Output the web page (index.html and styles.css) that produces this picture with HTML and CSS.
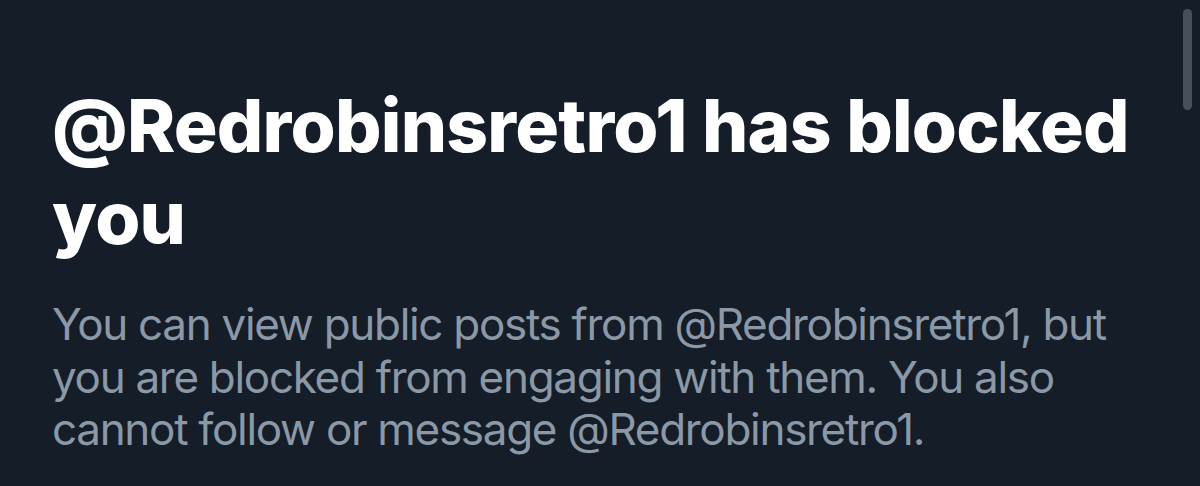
FILE: index.html
```html
<!DOCTYPE html>
<html lang="en">
<head>
<meta charset="utf-8">
<link rel="stylesheet" href="styles.css">
<title>Blocked</title>
</head>
<body>
<div class="page">
  <main class="content">
    <h1 class="title">@Redrobinsretro1 has blocked you</h1>
    <p class="desc">You can view public posts from @Redrobinsretro1, but you are blocked from engaging with them. You also cannot follow or message @Redrobinsretro1.</p>
  </main>
  <div class="scrollbar"><div class="thumb"></div></div>
</div>
</body>
</html>
```
FILE: styles.css
```css
html, body {
  margin: 0;
  padding: 0;
  background: #151d28;
  height: 100%;
  overflow: hidden;
}
.page {
  display: flex;
  height: 486px;
}
.content {
  flex: 1;
  padding: 80px 0 0 52px;
  font-family: Inter, "Liberation Sans", sans-serif;
}
.title {
  margin: 0;
  color: #ffffff;
  font-size: 73px;
  font-weight: 800;
  line-height: 92px;
  letter-spacing: -0.75px;
  max-width: 1110px;
}
.desc {
  margin: 34px 0 0;
  color: #8b98a6;
  font-size: 44px;
  font-weight: 400;
  line-height: 52.5px;
  letter-spacing: -1.3px;
  max-width: 1085px;
}
.scrollbar {
  width: 17px;
  padding-top: 9px;
  display: flex;
  justify-content: flex-start;
}
.thumb {
  width: 9px;
  height: 101px;
  border-radius: 4.5px;
  background: #474f5a;
}
```
